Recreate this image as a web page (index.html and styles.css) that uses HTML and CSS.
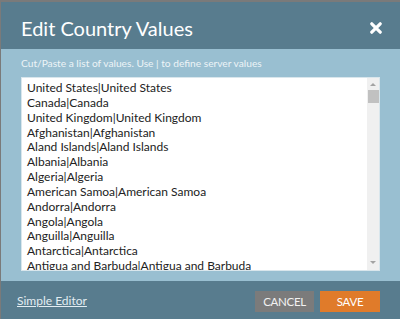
FILE: index.html
```html
<!DOCTYPE html>
<html>
<head>
<meta charset="utf-8">
<link rel="stylesheet" href="styles.css">
</head>
<body>
<div class="dialog">
  <div class="header">
    <h1 class="title">Edit Country Values</h1>
    <span class="close" aria-label="Close">
      <svg width="12" height="12" viewBox="0 0 12 12"><path d="M1.8 1.8 L10.2 10.2 M10.2 1.8 L1.8 10.2" stroke="#fff" stroke-width="3.2" stroke-linecap="round"/></svg>
    </span>
  </div>
  <div class="content">
    <p class="hint">Cut/Paste a list of values. Use | to define server values</p>
    <div class="box">
      <div class="lines">
        <div>United States|United States</div>
        <div>Canada|Canada</div>
        <div>United Kingdom|United Kingdom</div>
        <div>Afghanistan|Afghanistan</div>
        <div>Aland Islands|Aland Islands</div>
        <div>Albania|Albania</div>
        <div>Algeria|Algeria</div>
        <div>American Samoa|American Samoa</div>
        <div>Andorra|Andorra</div>
        <div>Angola|Angola</div>
        <div>Anguilla|Anguilla</div>
        <div>Antarctica|Antarctica</div>
        <div>Antigua and Barbuda|Antigua and Barbuda</div>
      </div>
      <div class="scrollbar">
        <span class="arrow up"></span>
        <span class="thumb"></span>
        <span class="track"></span>
        <span class="arrow down"></span>
      </div>
    </div>
  </div>
  <div class="footer">
    <a class="link" href="#">Simple Editor</a>
    <div class="buttons">
      <button class="btn cancel">CANCEL</button>
      <button class="btn save">SAVE</button>
    </div>
  </div>
</div>
</body>
</html>
```
FILE: styles.css
```css
html, body {
  margin: 0;
  padding: 0;
  height: 100%;
}
body {
  background: #7a7a7a;
  font-family: Lato, "Open Sans", sans-serif;
  overflow: hidden;
}
.dialog {
  margin: 2px 0 0 1px;
  height: 317px;
  display: flex;
  flex-direction: column;
}
.header {
  background: #587c8e;
  height: 47px;
  display: flex;
  align-items: center;
  justify-content: space-between;
  padding: 0 18px 0 20px;
  flex: none;
}
.title {
  margin: 0;
  color: #fff;
  font-size: 20px;
  font-weight: 400;
  line-height: 24px;
  position: relative;
  top: 2px;
}
.close {
  display: flex;
  position: relative;
  top: 2px;
}
.content {
  background: #99bfd1;
  height: 232px;
  flex: none;
  padding: 0 20px 0 20px;
  box-sizing: border-box;
  display: flex;
  flex-direction: column;
}
.hint {
  margin: 6px 0 0;
  color: #edf4f7;
  font-size: 10.2px;
  line-height: 16px;
  height: 22px;
}
.box {
  background: #fff;
  border: 1px solid #d9e6ec;
  height: 194px;
  box-sizing: border-box;
  display: flex;
  justify-content: space-between;
}
.lines {
  padding: 3px 0 0 5px;
  font-size: 12px;
  line-height: 14.85px;
  color: #222;
  overflow: hidden;
  white-space: nowrap;
}
.scrollbar {
  width: 12px;
  background: #f0f0f0;
  display: flex;
  flex-direction: column;
  align-items: center;
  flex: none;
}
.arrow {
  width: 0;
  height: 0;
  border-left: 3px solid transparent;
  border-right: 3px solid transparent;
  margin: 5px 0 4px;
}
.arrow.up { border-bottom: 3px solid #a3a3a3; }
.arrow.down { border-top: 3px solid #a3a3a3; margin: 3px 0 6px; }
.thumb {
  width: 11px;
  height: 13px;
  background: #c1c1c1;
}
.track { flex: 1; }
.footer {
  background: #587c8e;
  flex: 1;
  display: flex;
  align-items: center;
  justify-content: space-between;
  padding: 0 20px 0 16px;
}
.link {
  color: #e3edf2;
  font-size: 12px;
  text-decoration: underline;
}
.buttons {
  display: flex;
  gap: 6px;
  position: relative;
  top: 1px;
}
.btn {
  border: none;
  font-family: Lato, "Open Sans", sans-serif;
  font-size: 11.5px;
  letter-spacing: -0.3px;
  color: #fff;
  height: 21px;
  padding: 0;
  width: 59px;
}
.cancel { background: #7b7b7b; color: #f2f2f2; }
.save { background: #e07b2a; width: 60px; }
```
